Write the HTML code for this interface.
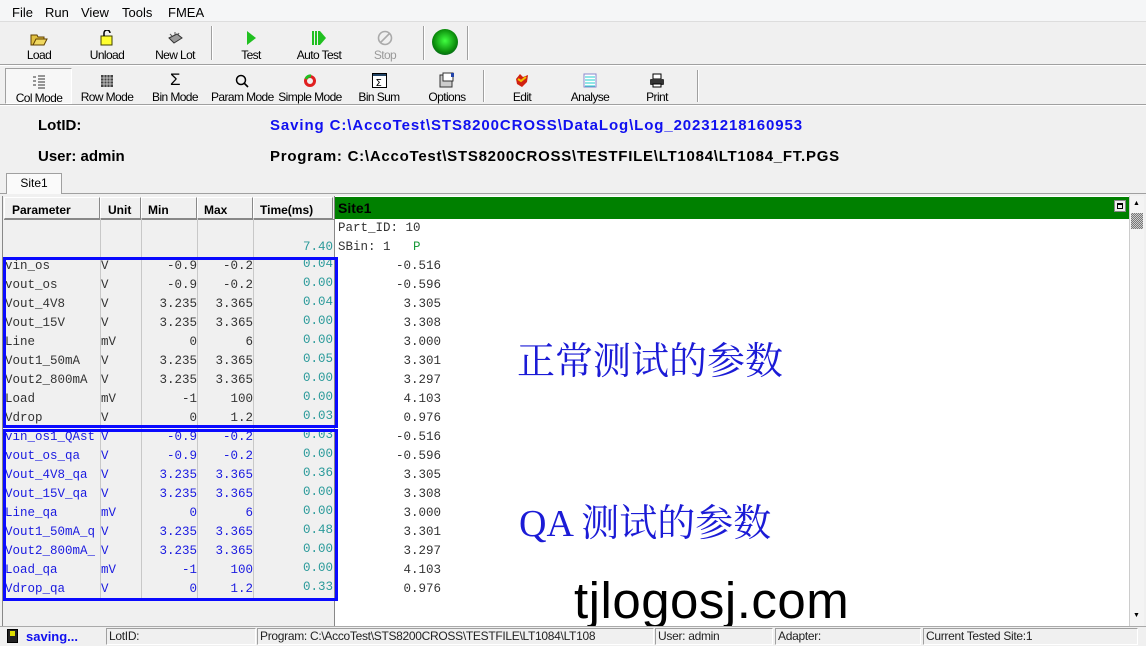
<!DOCTYPE html>
<html><head><meta charset="utf-8"><style>
*{margin:0;padding:0;box-sizing:border-box}
body{width:1146px;height:646px;background:#f0f0f0;font-family:"Liberation Sans",Arial,sans-serif;font-size:12px;position:relative;overflow:hidden;color:#000}
.a{position:absolute}
.btn{position:absolute;text-align:center;font-size:12px;letter-spacing:-0.6px;white-space:nowrap}
.ic{height:18px;display:flex;justify-content:center;align-items:flex-end;margin-bottom:2px}
.sep{position:absolute;width:2px;border-left:1px solid #a0a0a0;border-right:1px solid #fff}
.mono{font-family:"Liberation Mono","DejaVu Sans Mono",monospace;font-size:12.5px}
.row{position:absolute;left:0;height:19px;line-height:19px;width:333px}
.row span{position:absolute}
.r{text-align:right}
.cjk{font-family:"Liberation Serif","Noto Serif CJK SC",serif;color:#1b1bd6;font-size:38px;white-space:nowrap}
.sb{position:absolute;top:628px;height:17px;border:1px solid;border-color:#a0a0a0 #fff #fff #a0a0a0;line-height:15px;padding-left:2px;font-size:12px;color:#222;letter-spacing:-0.3px}
</style></head><body>
<div class="a" style="left:0;top:0;width:1146px;height:22px;background:#f5f6f7;border-bottom:1px solid #ddd"></div>
<div class="a" style="left:12px;top:5px;font-size:13px">File</div>
<div class="a" style="left:45px;top:5px;font-size:13px">Run</div>
<div class="a" style="left:81px;top:5px;font-size:13px">View</div>
<div class="a" style="left:122px;top:5px;font-size:13px">Tools</div>
<div class="a" style="left:168px;top:5px;font-size:13px">FMEA</div>
<div class="a" style="left:0;top:64px;width:1146px;height:2px;border-top:1px solid #a0a0a0;border-bottom:1px solid #fff"></div>
<div class="btn" style="left:14px;top:28px;width:50px"><div class="ic"><svg width="18" height="15"><path d="M1 4h6l1 2h6v8H1z" fill="#e0c040" stroke="#604000"/><path d="M3 14l3-6h11l-3 6z" fill="#f0d860" stroke="#604000"/></svg></div>Load</div>
<div class="btn" style="left:82px;top:28px;width:50px"><div class="ic"><svg width="14" height="16"><rect x="1" y="6" width="11" height="9" fill="#ffff30" stroke="#404000"/><path d="M4 6V3a3 3 0 0 1 6 0" fill="none" stroke="#000" stroke-width="1.5"/></svg></div>Unload</div>
<div class="btn" style="left:150px;top:28px;width:50px"><div class="ic"><svg width="16" height="14"><path d="M2 6l8-4 5 4-8 5z" fill="#999" stroke="#333"/><path d="M3 2l2 2M8 0v3M12 1l-1 2" stroke="#555"/></svg></div>New Lot</div>
<div class="sep" style="left:211px;top:26px;height:34px"></div>
<div class="btn" style="left:226px;top:28px;width:50px"><div class="ic"><svg width="12" height="16"><path d="M2 1l9 7-9 7z" fill="#20c020"/></svg></div>Test</div>
<div class="btn" style="left:290px;top:28px;width:58px"><div class="ic"><svg width="14" height="16"><path d="M1 1v14M4 1v14M7 1v14" stroke="#20c020" stroke-width="2"/><path d="M8 1l6 7-6 7z" fill="#20c020"/></svg></div>Auto Test</div>
<div class="btn" style="left:360px;top:28px;width:50px;color:#9a9a9a"><div class="ic"><svg width="16" height="16"><circle cx="8" cy="8" r="6.5" fill="none" stroke="#aaa" stroke-width="1.6"/><path d="M3.5 12.5l9-9" stroke="#aaa" stroke-width="1.6"/></svg></div>Stop</div>
<div class="sep" style="left:423px;top:26px;height:34px"></div>
<div class="a" style="left:432px;top:29px;width:26px;height:26px;border-radius:50%;background:radial-gradient(circle at 50% 45%,#40ff40,#0a8a0a 60%,#033 100%)"></div>
<div class="sep" style="left:467px;top:26px;height:34px"></div>
<div class="a" style="left:5px;top:68px;width:67px;height:36px;border:1px solid;border-color:#a0a0a0 #fff #fff #a0a0a0;background:#f7f7f7"></div>
<div class="btn" style="left:10px;top:71px;width:58px"><div class="ic"><svg width="14" height="14"><path d="M1 2h3M1 6h3M1 10h3M6 1h7M6 4h7M6 7h7M6 10h7M6 13h7" stroke="#333"/></svg></div>Col Mode</div>
<div class="btn" style="left:78px;top:70px;width:58px"><div class="ic"><svg width="14" height="14"><path d="M1 1h12v12H1z" fill="#444"/><path d="M1 4h12M1 7h12M1 10h12M4 1v12M7 1v12M10 1v12" stroke="#ddd" stroke-width=".8"/></svg></div>Row Mode</div>
<div class="btn" style="left:146px;top:70px;width:58px"><div class="ic" style="font-size:17px;line-height:16px">Σ</div>Bin Mode</div>
<div class="btn" style="left:211px;top:70px;width:62px"><div class="ic"><svg width="14" height="14"><circle cx="6" cy="6" r="4.5" fill="none" stroke="#000" stroke-width="1.5"/><path d="M9 9l4 4" stroke="#000" stroke-width="1.6"/></svg></div>Param Mode</div>
<div class="btn" style="left:278px;top:70px;width:64px"><div class="ic"><svg width="14" height="14"><circle cx="7" cy="7" r="4.5" fill="none" stroke="#e02020" stroke-width="3"/><path d="M3 5a4.5 4.5 0 0 1 5-3" stroke="#20c020" stroke-width="3" fill="none"/></svg></div>Simple Mode</div>
<div class="btn" style="left:350px;top:70px;width:58px"><div class="ic"><svg width="15" height="15"><rect x=".5" y=".5" width="14" height="14" fill="#fff" stroke="#000"/><rect x="1" y="1" width="13" height="2" fill="#246"/><text x="3.5" y="13" font-size="10" font-family="DejaVu Sans">Σ</text></svg></div>Bin Sum</div>
<div class="btn" style="left:418px;top:70px;width:58px"><div class="ic"><svg width="16" height="16"><rect x="1" y="3" width="12" height="12" fill="#ccc" stroke="#333"/><rect x="4" y="1" width="10" height="8" fill="#fff" stroke="#333"/><rect x="12" y="1" width="3" height="4" fill="#24a"/></svg></div>Options</div>
<div class="sep" style="left:483px;top:70px;height:32px"></div>
<div class="btn" style="left:495px;top:70px;width:54px"><div class="ic"><svg width="16" height="15"><path d="M2 6l4-5 3 3 5-2-1 7-5 5-5-3z" fill="#d02010"/><path d="M4 6l3 2 5-4" stroke="#f0c000" stroke-width="2" fill="none"/></svg></div>Edit</div>
<div class="btn" style="left:562px;top:70px;width:56px"><div class="ic"><svg width="14" height="15"><rect x="1" y="1" width="12" height="13" fill="#fff" stroke="#88c"/><path d="M2 4h10M2 7h10M2 10h10M2 13h10" stroke="#2cc"/></svg></div>Analyse</div>
<div class="btn" style="left:630px;top:70px;width:54px"><div class="ic"><svg width="16" height="15"><rect x="4" y="1" width="8" height="5" fill="#fff" stroke="#000"/><rect x="1" y="6" width="14" height="6" rx="1" fill="#333"/><rect x="4" y="11" width="8" height="3" fill="#fff" stroke="#000"/></svg></div>Print</div>
<div class="sep" style="left:697px;top:70px;height:32px"></div>
<div class="a" style="left:0;top:104px;width:1146px;height:2px;border-top:1px solid #a0a0a0;border-bottom:1px solid #fff"></div>
<div class="a" style="left:38px;top:117px;font-size:15px;font-weight:bold">LotID:</div>
<div class="a" style="left:270px;top:117px;font-size:15px;font-weight:bold;color:#1010f0;letter-spacing:0.9px;white-space:nowrap">Saving C:\AccoTest\STS8200CROSS\DataLog\Log_20231218160953</div>
<div class="a" style="left:38px;top:148px;font-size:15px;font-weight:bold">User: admin</div>
<div class="a" style="left:270px;top:148px;font-size:15px;font-weight:bold;letter-spacing:0.75px;white-space:nowrap">Program: C:\AccoTest\STS8200CROSS\TESTFILE\LT1084\LT1084_FT.PGS</div>
<div class="a" style="left:0;top:193px;width:1146px;border-top:1px solid #a0a0a0"></div>
<div class="a" style="left:6px;top:173px;width:56px;height:21px;border:1px solid #a0a0a0;border-bottom:none;background:#fafafa;font-size:12px;text-align:center;line-height:18px">Site1</div>
<div class="a" style="left:2px;top:196px;width:332px;height:430px;background:#f0f0f0;border-left:1px solid #888"></div>
<div class="a" style="left:4px;top:219px;width:330px;border-top:1px solid #888"></div>
<div class="a" style="left:4px;top:197px;width:96px;height:22px;border:1px solid;border-color:#fff #888 #888 #fff;padding:5px 7px;font-weight:bold">Parameter</div>
<div class="a" style="left:100px;top:197px;width:41px;height:22px;border:1px solid;border-color:#fff #888 #888 #fff;padding:5px 7px;font-weight:bold">Unit</div>
<div class="a" style="left:141px;top:197px;width:56px;height:22px;border:1px solid;border-color:#fff #888 #888 #fff;padding:5px 6px;font-weight:bold">Min</div>
<div class="a" style="left:197px;top:197px;width:56px;height:22px;border:1px solid;border-color:#fff #888 #888 #fff;padding:5px 6px;font-weight:bold">Max</div>
<div class="a" style="left:253px;top:197px;width:80px;height:22px;border:1px solid;border-color:#fff #888 #888 #fff;padding:5px 6px;font-weight:bold">Time(ms)</div>
<div class="a" style="left:100px;top:219px;height:380px;border-left:1px solid #c8c8c8"></div>
<div class="a" style="left:141px;top:219px;height:380px;border-left:1px solid #c8c8c8"></div>
<div class="a" style="left:197px;top:219px;height:380px;border-left:1px solid #c8c8c8"></div>
<div class="a" style="left:253px;top:219px;height:380px;border-left:1px solid #c8c8c8"></div>
<div class="a mono" style="left:253px;top:238px;width:80px;text-align:right;color:#2a9a9a;line-height:19px">7.40</div>
<div id="rows"></div>
<div class="a" style="left:334px;top:196px;width:795px;height:430px;background:#fff;border-left:1px solid #888"></div>
<div class="a" style="left:335px;top:197px;width:794px;height:22px;background:#008000;color:#000;font-size:14px;font-weight:bold;padding:3px 3px;line-height:16px">Site1</div>
<div class="a" style="left:1114px;top:200px;width:12px;height:12px;background:#eee;border:1px solid #888"><div style="margin:2px;width:6px;height:6px;border:1px solid #000;border-top-width:2px"></div></div>
<div class="a mono" style="left:338px;top:219px;line-height:19px;color:#333">Part_ID: 10<br>SBin: 1&nbsp;&nbsp;&nbsp;<span style="color:#1a9a3a">P</span></div>
<div id="vals"></div>
<div class="a" style="left:1129px;top:196px;width:15px;height:430px;background:#f4f4f4;border-left:1px solid #ccc"></div>
<div class="a" style="left:1131px;top:213px;width:12px;height:16px;background:repeating-conic-gradient(#777 0 25%,#ccc 0 50%) 0 0/2px 2px"></div>
<div class="a" style="left:1133px;top:200px;font-size:7px">▲</div>
<div class="a" style="left:1133px;top:612px;font-size:7px">▼</div>
<div class="a cjk" style="left:517px;top:330px">正常测试的参数</div>
<div class="a cjk" style="left:519px;top:492px">QA 测试的参数</div>
<div class="a" style="left:574px;top:573px;font-size:51px;color:#000;letter-spacing:0.5px;line-height:1.1">tjlogosj.com</div>
<div class="a" style="left:3px;top:257px;width:335px;height:171px;border:3px solid #0a0aff"></div>
<div class="a" style="left:3px;top:429px;width:335px;height:172px;border:3px solid #0a0aff"></div>
<div class="a" style="left:0;top:626px;width:1146px;height:20px;background:#f0f0f0;border-top:1px solid #aaa"></div>
<div class="a" style="left:7px;top:629px;width:11px;height:14px;background:#222;border:1px solid #000"><div style="margin:1px 2px;width:5px;height:5px;background:#dd0"></div></div>
<div class="a" style="left:26px;top:629px;font-weight:bold;color:#1010f0;font-size:13px">saving...</div>
<div class="sb" style="left:106px;width:150px">LotID:</div>
<div class="sb" style="left:257px;width:397px;overflow:hidden;white-space:nowrap">Program: C:\AccoTest\STS8200CROSS\TESTFILE\LT1084\LT108</div>
<div class="sb" style="left:655px;width:118px">User: admin</div>
<div class="sb" style="left:775px;width:146px">Adapter:</div>
<div class="sb" style="left:923px;width:215px">Current Tested Site:1</div>
<script>
var d=[["vin_os","V","-0.9","-0.2","0.04","-0.516"],["vout_os","V","-0.9","-0.2","0.00","-0.596"],["Vout_4V8","V","3.235","3.365","0.04","3.305"],["Vout_15V","V","3.235","3.365","0.00","3.308"],["Line","mV","0","6","0.00","3.000"],["Vout1_50mA","V","3.235","3.365","0.05","3.301"],["Vout2_800mA","V","3.235","3.365","0.00","3.297"],["Load","mV","-1","100","0.00","4.103"],["Vdrop","V","0","1.2","0.03","0.976"],
["vin_os1_QAst","V","-0.9","-0.2","0.03","-0.516"],["vout_os_qa","V","-0.9","-0.2","0.00","-0.596"],["Vout_4V8_qa","V","3.235","3.365","0.36","3.305"],["Vout_15V_qa","V","3.235","3.365","0.00","3.308"],["Line_qa","mV","0","6","0.00","3.000"],["Vout1_50mA_q","V","3.235","3.365","0.48","3.301"],["Vout2_800mA_","V","3.235","3.365","0.00","3.297"],["Load_qa","mV","-1","100","0.00","4.103"],["Vdrop_qa","V","0","1.2","0.33","0.976"]];
var h="",v="";
d.forEach(function(r,i){var y=257+i*19;var c=i>8?"#1a1ae0":"#333";
h+='<div class="row mono" style="top:'+y+'px;color:'+c+'"><span style="left:5px;width:96px;overflow:hidden;white-space:nowrap">'+r[0]+'</span><span style="left:101px">'+r[1]+'</span><span class="r" style="left:141px;width:56px">'+r[2]+'</span><span class="r" style="left:197px;width:56px">'+r[3]+'</span><span class="r" style="left:253px;width:80px;color:#2a9a9a;top:-2px">'+r[4]+'</span></div>';
v+='<div class="a mono r" style="left:338px;width:103px;top:'+y+'px;line-height:19px;color:#333">'+r[5]+'</div>';});
document.getElementById("rows").outerHTML=h;document.getElementById("vals").outerHTML=v;
</script>
</body></html>
